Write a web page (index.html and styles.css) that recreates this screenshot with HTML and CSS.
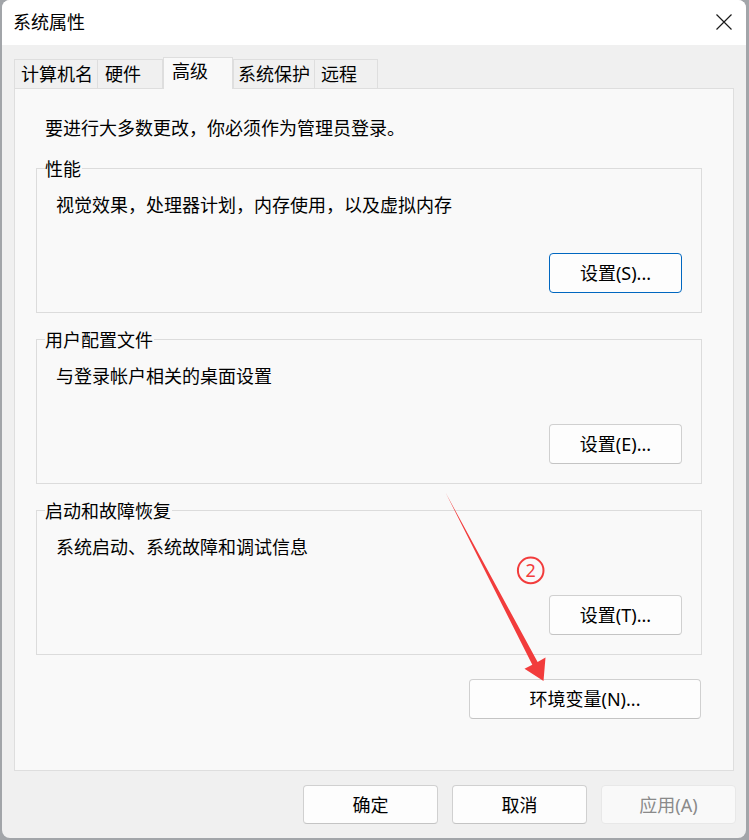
FILE: index.html
```html
<!DOCTYPE html>
<html lang="zh-CN">
<head>
<meta charset="utf-8">
<title>系统属性</title>
<link rel="stylesheet" href="styles.css">
</head>
<body>
<div class="window">
  <div class="titlebar">
    <span class="title">系统属性</span>
    <svg class="close" width="18" height="18" viewBox="0 0 18 18">
      <path d="M1.5 1.5 L16.5 16.5 M16.5 1.5 L1.5 16.5" stroke="#1a1a1a" stroke-width="1.2" fill="none"/>
    </svg>
  </div>
  <div class="content">
    <div class="tabs">
      <div class="tab tab-a">计算机名</div>
      <div class="tab tab-b">硬件</div>
      <div class="tab tab-c selected">高级</div>
      <div class="tab tab-d">系统保护</div>
      <div class="tab tab-e">远程</div>
    </div>
    <div class="panel">
      <p class="intro">要进行大多数更改，你必须作为管理员登录。</p>
      <div class="group">
        <span class="legend">性能</span>
        <p class="desc">视觉效果，处理器计划，内存使用，以及虚拟内存</p>
        <button class="btn btn-group focus">设置(S)...</button>
      </div>
      <div class="group">
        <span class="legend">用户配置文件</span>
        <p class="desc">与登录帐户相关的桌面设置</p>
        <button class="btn btn-group">设置(E)...</button>
      </div>
      <div class="group">
        <span class="legend">启动和故障恢复</span>
        <p class="desc">系统启动、系统故障和调试信息</p>
        <button class="btn btn-group">设置(T)...</button>
      </div>
      <div class="env-row">
        <button class="btn btn-env">环境变量(N)...</button>
      </div>
    </div>
    <div class="footer">
      <button class="btn btn-foot">确定</button>
      <button class="btn btn-foot">取消</button>
      <button class="btn btn-foot disabled">应用(A)</button>
    </div>
  </div>
</div>
<svg class="annot" width="749" height="840" viewBox="0 0 749 840">
  <polygon points="445.5,492.5 537.6,662 545.5,657.5 543.5,681 524.5,668.8 532.3,664.8" fill="#f23c3c"/>
  <circle cx="530.7" cy="570.4" r="12.8" fill="none" stroke="#f23c3c" stroke-width="2"/>
  <text x="530.7" y="577" text-anchor="middle" class="annot-num">2</text>
</svg>
</body>
</html>
```
FILE: styles.css
```css
html, body {
  margin: 0;
  padding: 0;
}
body {
  width: 749px;
  height: 840px;
  background: #a2a5a9;
  font-family: "Noto Sans", "Noto Sans CJK SC", sans-serif;
  font-size: 18px;
  line-height: 24px;
  color: #000;
  position: relative;
  overflow: hidden;
}
.window {
  margin: 0 0 0 2px;
  width: 744px;
  height: 838px;
  border-radius: 8px;
  overflow: hidden;
  background: #f0f0f0;
  display: flex;
  flex-direction: column;
  box-sizing: border-box;
}
.titlebar {
  height: 45px;
  background: #ffffff;
  display: flex;
  align-items: center;
  justify-content: space-between;
  padding: 0 13px 0 11px;
  box-sizing: border-box;
  flex: none;
}
.title {
  font-size: 18px;
  line-height: 24px;
  margin-top: -1px;
}
.close {
  display: block;
  margin-top: -1px;
}
.content {
  flex: 1;
  display: flex;
  flex-direction: column;
  padding: 12px 12px 0 12px;
}
.tabs {
  display: flex;
  align-items: flex-end;
  height: 31px;
}
.tab {
  box-sizing: border-box;
  height: 29px;
  border: 1px solid #dedede;
  border-bottom: none;
  background: #f0f0f0;
  line-height: 27px;
  padding-top: 1px;
  white-space: nowrap;
}
.tab-a { width: 84px; padding-left: 6px; }
.tab-b { width: 65px; padding-left: 7px; border-left: none; }
.tab-c { width: 70px; padding-left: 8px; }
.tab-d { width: 82px; padding-left: 4px; }
.tab-e { width: 63px; padding-left: 6px; border-left: none; }
.tab.selected {
  height: 32px;
  margin-bottom: -1px;
  background: #f9f9f9;
  position: relative;
  z-index: 1;
  line-height: 26px;
  padding-top: 0;
}
.panel {
  box-sizing: border-box;
  height: 683px;
  background: #f9f9f9;
  border: 1px solid #dedede;
  padding: 27px 0 0 0;
  display: flex;
  flex-direction: column;
}
.intro {
  margin: 0 0 28px 30px;
}
.group {
  position: relative;
  box-sizing: border-box;
  height: 145px;
  margin: 0 31px 26px 21px;
  border: 1px solid #dcdcdc;
  padding: 24px 19px 19px 19px;
  display: flex;
  flex-direction: column;
  align-items: flex-start;
}
.legend {
  position: absolute;
  top: -12px;
  left: 8px;
  padding: 0 1px 0 0;
  background: #f9f9f9;
}
.desc {
  margin: 0;
}
.btn {
  font-family: "Noto Sans", "Noto Sans CJK SC", sans-serif;
  font-size: 18px;
  line-height: 24px;
  color: #000;
  background: #fdfdfd;
  border: 1px solid #d0d0d0;
  border-bottom-color: #c4c4c4;
  border-radius: 4px;
  padding: 0;
  box-sizing: border-box;
  cursor: default;
}
.btn-group {
  margin-top: auto;
  align-self: flex-end;
  width: 133px;
  height: 40px;
}
.btn.focus {
  border: 1px solid #0067c0;
}
.env-row {
  display: flex;
  justify-content: flex-end;
  margin: -2px 32px 0 0;
}
.btn-env {
  width: 232px;
  height: 40px;
}
.footer {
  display: flex;
  justify-content: flex-end;
  gap: 14px;
  padding: 14px 0 0 0;
  margin-right: -2px;
}
.btn-foot {
  width: 135px;
  height: 39px;
}
.btn.disabled {
  background: #f9f9f9;
  border-color: #e8e8e8;
  color: #8a8a8a;
}
.annot {
  position: absolute;
  left: 0;
  top: 0;
  pointer-events: none;
}
.annot-num {
  font-family: "Noto Sans", sans-serif;
  font-size: 18px;
  fill: #f23c3c;
}
```
